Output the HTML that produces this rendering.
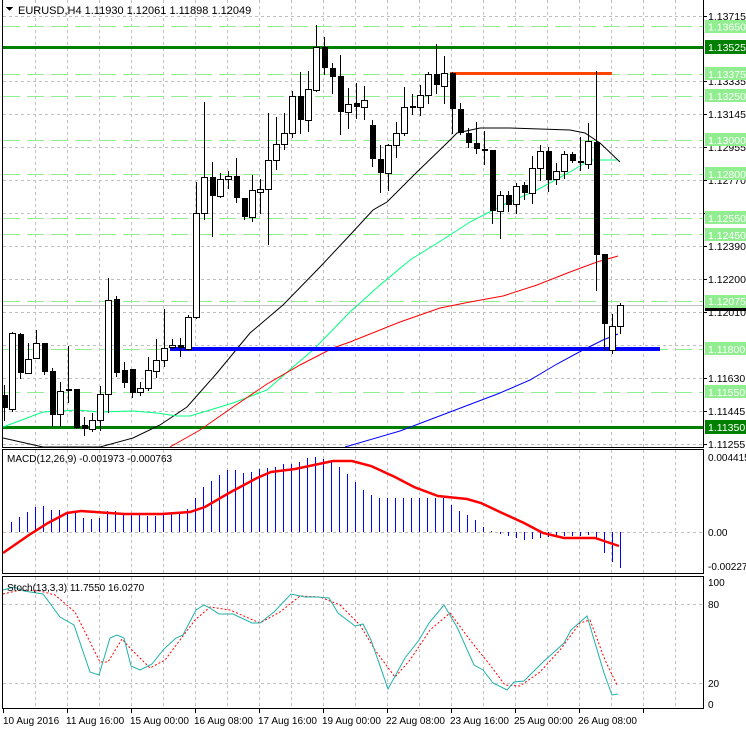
<!DOCTYPE html>
<html><head><meta charset="utf-8"><style>
html,body{margin:0;padding:0;background:#fff;width:746px;height:731px;overflow:hidden}
svg{display:block;font-family:"Liberation Sans",sans-serif}
text{font-size:10.5px;fill:#000}
</style></head><body>
<svg id="s" width="746" height="731" viewBox="0 0 746 731" shape-rendering="crispEdges">
<g id="grid"></g>
<g id="lv"></g>
<g id="ma" shape-rendering="auto"></g>
<g id="cd"></g>
<g id="ind" shape-rendering="auto"></g>
<!-- borders -->
<g fill="none" stroke="#000" stroke-width="1">
<rect x="2.5" y="-1" width="701" height="448.5"/>
<rect x="2.5" y="449.5" width="701" height="124"/>
<rect x="2.5" y="576.5" width="701" height="132"/>
</g>
<g id="ticks" stroke="#000"></g>
<!-- title -->
<path d="M6 7 L13 7 L9.5 11 Z" fill="#000"/>
<text x="18" y="14" style="font-size:11px">EURUSD,H4  1.11930 1.12061 1.11898 1.12049</text>
<!-- right axis labels -->
<g id="axl"></g>
<text x="7" y="462" style="font-size:10px">MACD(12,26,9) -0.001973 -0.000763</text>
<text x="708" y="461" style="font-size:10px">0.004415</text>
<text x="708" y="536" style="font-size:10px">0.00</text>
<text x="708" y="570" style="font-size:10px">-0.002277</text>
<text x="7" y="591" style="font-size:10px">Stoch(13,3,3) 11.7550 16.0270</text>
<text x="708" y="586" style="font-size:10px">100</text>
<text x="708" y="608" style="font-size:10px">80</text>
<text x="708" y="687" style="font-size:10px">20</text>
<text x="708" y="708" style="font-size:10px">0</text>
<g style="font-size:10px">
<text x="3" y="724" style="font-size:10px">10 Aug 2016</text>
<text x="66" y="724" style="font-size:10px">11 Aug 16:00</text>
<text x="130" y="724" style="font-size:10px">15 Aug 00:00</text>
<text x="194" y="724" style="font-size:10px">16 Aug 08:00</text>
<text x="258" y="724" style="font-size:10px">17 Aug 16:00</text>
<text x="322" y="724" style="font-size:10px">19 Aug 00:00</text>
<text x="386" y="724" style="font-size:10px">22 Aug 08:00</text>
<text x="450" y="724" style="font-size:10px">23 Aug 16:00</text>
<text x="514" y="724" style="font-size:10px">25 Aug 00:00</text>
<text x="578" y="724" style="font-size:10px">26 Aug 08:00</text>
</g>
<g id="axt">
<text x="708" y="20">1.13715</text>
<text x="708" y="85">1.13335</text>
<text x="708" y="118">1.13145</text>
<text x="708" y="151">1.12955</text>
<text x="708" y="184">1.12770</text>
<text x="708" y="250">1.12390</text>
<text x="708" y="283">1.12200</text>
<text x="708" y="316">1.12010</text>
<text x="708" y="382">1.11630</text>
<text x="708" y="415">1.11445</text>
<text x="708" y="448">1.11255</text>
</g>
<g id="hl" style="font-size:10.5px">
<rect x="705" y="20" width="41" height="13" fill="#90EE90"/><text x="708" y="30.5" style="fill:#fff">1.13650</text>
<rect x="705" y="40" width="41" height="14" fill="#008000"/><text x="708" y="51" style="fill:#fff">1.13525</text>
<rect x="705" y="67" width="41" height="13" fill="#90EE90"/><text x="708" y="78" style="fill:#fff">1.13375</text>
<rect x="705" y="89" width="41" height="13" fill="#90EE90"/><text x="708" y="100" style="fill:#fff">1.13250</text>
<rect x="705" y="133" width="41" height="13" fill="#90EE90"/><text x="708" y="144" style="fill:#fff">1.13000</text>
<rect x="705" y="167" width="41" height="13" fill="#90EE90"/><text x="708" y="178" style="fill:#fff">1.12800</text>
<rect x="705" y="211" width="41" height="13" fill="#90EE90"/><text x="708" y="222" style="fill:#fff">1.12550</text>
<rect x="705" y="228" width="41" height="13" fill="#90EE90"/><text x="708" y="239" style="fill:#fff">1.12450</text>
<rect x="705" y="295" width="41" height="13" fill="#90EE90"/><text x="708" y="305" style="fill:#fff">1.12075</text>
<rect x="705" y="308" width="41" height="3" fill="#000"/>
<rect x="705" y="342" width="41" height="13" fill="#90EE90"/><text x="708" y="353" style="fill:#fff">1.11800</text>
<rect x="705" y="385" width="41" height="13" fill="#90EE90"/><text x="708" y="396" style="fill:#fff">1.11550</text>
<rect x="705" y="420" width="41" height="14" fill="#008000"/><text x="708" y="431" style="fill:#fff">1.11350</text>
</g>
</svg>
<script>
var NS="http://www.w3.org/2000/svg";
function el(p,t,a){var e=document.createElementNS(NS,t);for(var k in a)e.setAttribute(k,a[k]);document.getElementById(p).appendChild(e);return e;}
// grid
var gy=[16,48,81,114,147,180,213,246,279,312,345,378,411,444];
gy.forEach(function(y){el('grid','line',{x1:3,x2:703,y1:y+.5,y2:y+.5,stroke:'#C0C0C0','stroke-dasharray':'3,3'})});
for(var x=35;x<703;x+=32){
 [[0,447],[450,573],[577,708]].forEach(function(r){el('grid','line',{x1:x+.5,x2:x+.5,y1:r[0],y2:r[1],stroke:'#C0C0C0','stroke-dasharray':'3,3'})});
}
[532,604,683].forEach(function(y){el('grid','line',{x1:3,x2:703,y1:y+.5,y2:y+.5,stroke:'#C0C0C0','stroke-dasharray':'3,3'})});
for(var x=3;x<703;x+=64){el('ticks','line',{x1:x+.5,x2:x+.5,y1:709,y2:713})}
[16,81,114,147,180,213,246,279,312,378,411,444].forEach(function(y){el('ticks','line',{x1:703,x2:707,y1:y+.5,y2:y+.5})});
// levels
[26,74,96,140,174,218,234,301,349,392].forEach(function(y){el('lv','line',{x1:3,x2:703,y1:y+.5,y2:y+.5,stroke:'#90EE90','stroke-dasharray':'17,7'})});
el('lv','line',{x1:3,x2:703,y1:305.5,y2:305.5,stroke:'#C0C0C0'});
el('lv','rect',{x:3,y:46,width:700,height:3,fill:'#008000'});
el('lv','rect',{x:3,y:426,width:700,height:3,fill:'#008000'});
// MAs
function pl(g,pts,c,w,d){var a={points:pts.map(function(p){return p.join(',')}).join(' '),fill:'none',stroke:c,'stroke-width':w};if(d)a['stroke-dasharray']=d;el(g,'polyline',a);}
pl('ma',[[3,438],[43,447],[100,447],[133,438],[160,425],[187,407],[217,373],[250,333],[283,305],[320,267],[350,235],[373,210],[387,202],[417,172],[447,143],[457,133],[480,128],[510,128],[540,129],[570,130],[585,133],[600,143],[620,162]],'#000',1);
pl('ma',[[3,427],[43,412],[77,410],[100,412],[133,411],[157,413],[177,416],[190,416],[210,410],[233,403],[267,390],[293,367],[313,350],[350,312],[380,285],[410,260],[447,237],[470,222],[503,205],[537,190],[570,172],[590,160],[617,160]],'#00FF7F',1);
pl('ma',[[170,447],[200,430],[233,407],[267,384],[300,365],[333,348],[350,342],[400,322],[440,308],[470,302],[503,296],[537,285],[570,272],[597,262],[618,256]],'#FF0000',1);
pl('ma',[[345,447],[400,431],[450,412],[500,393],[530,380],[557,364],[583,350],[603,340],[618,334]],'#0000FF',1);
el('ma','rect',{x:170,y:347,width:490,height:4,fill:'#0000FF'});
el('ma','rect',{x:450,y:72,width:162,height:3,fill:'#FF4500'});
// candles [o,c,h,l] in y
var C=[[395,408,385,420],[409,333,332,411],[334,373,333,378],[373,359,343,373],[358,343,330,358],[343,372,343,374],[371,415,368,426],[414,391,382,426],[389,391,346,402],[389,428,389,428],[425,429,417,435],[429,420,413,431],[420,394,386,430],[394,300,278,412],[299,373,296,376],[370,383,362,387],[369,393,369,397],[392,388,382,395],[388,370,357,390],[371,360,339,377],[360,348,309,366],[347,345,339,348],[345,348,338,356],[349,317,315,350],[317,213,182,318],[213,177,102,219],[177,196,162,236],[196,179,173,197],[179,176,171,188],[176,198,158,202],[198,217,198,219],[217,190,175,221],[192,189,179,213],[189,160,113,244],[160,144,117,169],[144,133,113,149],[133,96,91,137],[96,120,72,133],[120,89,71,131],[90,47,25,91],[47,68,37,74],[68,77,63,93],[76,112,55,134],[112,104,88,128],[103,107,83,118],[107,100,86,119],[125,159,120,166],[159,173,145,192],[173,145,144,190],[145,133,122,157],[133,107,87,135],[106,107,94,114],[107,95,85,115],[95,74,72,103],[74,85,44,93],[86,73,56,103],[73,109,72,133],[109,133,103,134],[133,143,128,147],[143,149,122,153],[149,151,131,164],[150,211,150,223],[211,195,191,238],[195,205,191,211],[204,186,183,213],[185,193,182,199],[193,168,156,203],[168,151,145,180],[151,180,147,191],[179,171,163,184],[171,154,151,178],[154,161,152,162],[161,163,137,170],[164,141,123,168],[142,255,71,290],[254,324,254,350],[350,326,314,353],[326,305,303,333]];
C.forEach(function(c,i){
 var x=4+8*i;
 el('cd','line',{x1:x+.5,x2:x+.5,y1:c[2],y2:c[3]+1,stroke:'#000'});
 var t=Math.min(c[0],c[1]),b=Math.max(c[0],c[1]);
 if(c[1]<c[0]) el('cd','rect',{x:x-2.5,y:t+.5,width:6,height:Math.max(b-t,1),fill:'#fff',stroke:'#000'});
 else el('cd','rect',{x:x-2,y:t,width:6,height:Math.max(b-t,2),fill:'#000'});
});
// MACD histogram
var H=[[11,522],[19,517],[27,512],[35,507],[43,506],[51,510],[59,510],[67,512],[75,512],[83,518],[91,519],[99,518],[107,511],[115,511],[123,513],[131,514],[139,514],[147,516],[155,516],[163,513],[171,513],[179,512],[187,509],[195,498],[203,487],[211,481],[219,475],[227,470],[235,470],[243,473],[251,472],[259,469],[267,468],[275,467],[283,464],[291,464],[299,462],[307,458],[315,457],[323,459],[331,462],[339,467],[347,474],[355,482],[363,490],[371,495],[379,498],[387,498],[395,498],[403,498],[411,498],[419,498],[427,498],[435,498],[443,498],[451,505],[459,511],[467,515],[475,520],[483,527],[491,531],[500,534],[508,536],[516,538],[524,540],[532,539],[540,538],[548,537],[556,537],[564,536],[572,536],[580,536],[588,535],[596,538],[604,553],[612,562],[620,568]];
H.forEach(function(h){el('ind','line',{x1:h[0]+.5,x2:h[0]+.5,y1:532,y2:h[1],stroke:'#0000FF','shape-rendering':'crispEdges'})});
pl('ind',[[3,553],[29,535],[48,523],[67,513],[81,511],[95,512],[124,514],[162,514],[190,512],[205,507],[229,493],[257,478],[271,472],[295,469],[314,465],[333,461],[352,461],[371,466],[395,477],[414,487],[438,496],[467,499],[481,503],[500,512],[524,523],[543,533],[564,538],[586,538],[595,538],[607,542],[619,546]],'#FF0000',2.5);
// stoch
pl('ind',[[3,594],[20,590],[40,591],[55,595],[75,612],[100,662],[108,662],[122,639],[130,648],[150,668],[165,660],[180,640],[195,620],[210,607],[230,610],[260,623],[280,612],[300,596],[320,597],[340,605],[360,625],[375,650],[395,677],[410,660],[430,630],[450,613],[470,640],[490,665],[505,685],[520,686],[540,672],[560,650],[580,623],[590,620],[605,660],[617,685]],'#FF0000',1,'2,2');
pl('ind',[[3,590],[14,587],[24,591],[43,594],[60,617],[74,625],[90,672],[99,675],[110,638],[117,635],[124,638],[131,666],[140,670],[152,664],[164,649],[176,638],[183,635],[196,610],[204,605],[210,608],[219,614],[233,614],[252,623],[260,623],[274,612],[291,594],[305,597],[317,597],[329,598],[338,613],[355,626],[363,624],[371,640],[388,689],[405,658],[419,640],[429,623],[444,605],[457,627],[474,665],[483,670],[493,683],[507,690],[514,682],[524,681],[543,662],[564,643],[571,630],[587,616],[604,673],[612,695],[618,694]],'#20B2AA',1);
</script>
</body></html>
